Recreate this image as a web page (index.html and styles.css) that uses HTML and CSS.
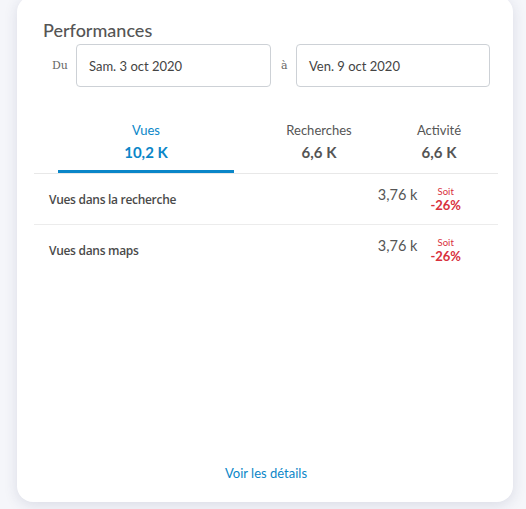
FILE: index.html
```html
<!DOCTYPE html>
<html lang="fr">
<head>
<meta charset="utf-8">
<title>Performances</title>
<link rel="stylesheet" href="styles.css">
</head>
<body>
<div class="page">
  <section class="card">
    <h2 class="title">Performances</h2>
    <div class="dates">
      <span class="date-label">Du</span>
      <div class="date-box">Sam. 3 oct 2020</div>
      <span class="date-label date-label--to">à</span>
      <div class="date-box">Ven. 9 oct 2020</div>
    </div>
    <div class="tabs">
      <div class="tab tab--active">
        <span class="tab-label">Vues</span>
        <span class="tab-value">10,2 K</span>
      </div>
      <div class="tab">
        <span class="tab-label">Recherches</span>
        <span class="tab-value">6,6 K</span>
      </div>
      <div class="tab">
        <span class="tab-label">Activité</span>
        <span class="tab-value">6,6 K</span>
      </div>
    </div>
    <div class="rows">
      <div class="row">
        <span class="row-name">Vues dans la recherche</span>
        <div class="row-stats">
          <span class="row-value">3,76 k</span>
          <div class="delta">
            <span class="delta-label">Soit</span>
            <span class="delta-value">-26%</span>
          </div>
        </div>
      </div>
      <div class="row">
        <span class="row-name">Vues dans maps</span>
        <div class="row-stats">
          <span class="row-value">3,76 k</span>
          <div class="delta">
            <span class="delta-label">Soit</span>
            <span class="delta-value">-26%</span>
          </div>
        </div>
      </div>
    </div>
    <div class="footer">
      <a class="details-link" href="#">Voir les détails</a>
    </div>
  </section>
</div>
</body>
</html>
```

FILE: styles.css
```css
* { box-sizing: border-box; }

html, body {
  margin: 0;
  padding: 0;
  height: 509px;
  overflow: hidden;
  background: #f5f6fa;
  font-family: Lato, "Open Sans", sans-serif;
  color: #555;
}

.page {
  padding: 0 13px 0 17px;
}

.card {
  margin-top: -4px;
  height: 506px;
  background: #fff;
  border-radius: 16px;
  box-shadow: 0 3px 14px rgba(40, 50, 90, 0.13);
  padding: 23px 15px 0 17px;
  display: flex;
  flex-direction: column;
}

.title {
  margin: 0 0 3px 9px;
  font-size: 18px;
  line-height: 22px;
  font-weight: 500;
  color: #555;
}

.dates {
  display: grid;
  grid-template-columns: 24px 195px 25px 194px;
  align-items: center;
  margin-left: 18px;
  height: 43px;
}

.date-label {
  font-family: "DejaVu Serif", serif;
  font-size: 11px;
  color: #666;
}

.date-label--to {
  padding-left: 10px;
}

.date-box {
  height: 43px;
  border: 1px solid #cdd1d6;
  border-radius: 4px;
  padding-left: 12px;
  display: flex;
  align-items: center;
  font-size: 13px;
  color: #444;
}

.tabs {
  margin-top: 35px;
  display: grid;
  grid-template-columns: 176px 170px 70px;
  padding-left: 24px;
  border-bottom: 1px solid #e8e8e8;
}

.tab {
  display: flex;
  flex-direction: column;
  align-items: center;
  padding-bottom: 9px;
  border-bottom: 3px solid transparent;
}

.tab-label {
  font-size: 13px;
  line-height: 16px;
  color: #555;
}

.tab-value {
  margin-top: 5px;
  font-size: 15px;
  line-height: 18px;
  font-weight: 700;
  color: #555;
}

.tab--active {
  border-bottom-color: #0a86c8;
}

.tab--active .tab-label,
.tab--active .tab-value {
  color: #0a86c8;
}

.row {
  height: 51px;
  display: flex;
  align-items: center;
  justify-content: space-between;
  padding: 0 37px 0 15px;
  border-bottom: 1px solid #ececec;
}

.row:last-child {
  border-bottom: none;
}

.row-name {
  font-family: "Open Sans", Lato, sans-serif;
  font-size: 12px;
  font-weight: 600;
  letter-spacing: -0.3px;
  color: #4a4a4a;
}

.row-stats {
  display: flex;
  align-items: flex-start;
  gap: 13px;
}

.row-value {
  margin-top: 2px;
  font-size: 14.5px;
  line-height: 14px;
  color: #555;
}

.delta {
  display: flex;
  flex-direction: column;
  align-items: center;
  color: #d8303d;
}

.delta-label {
  font-size: 9.5px;
  line-height: 12px;
}

.delta-value {
  font-size: 13px;
  line-height: 15px;
  font-weight: 700;
}

.footer {
  margin-top: auto;
  padding-bottom: 21px;
  text-align: center;
}

.details-link {
  font-size: 13px;
  line-height: 16px;
  color: #0a86c8;
  text-decoration: none;
}
```
